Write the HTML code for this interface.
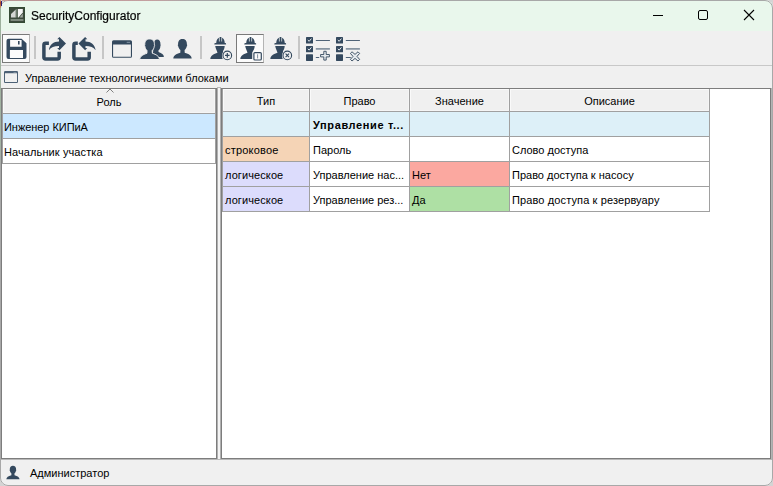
<!DOCTYPE html>
<html><head><meta charset="utf-8">
<style>
*{margin:0;padding:0;box-sizing:border-box}
html,body{width:773px;height:486px;overflow:hidden;background:#d4d4d4}
body{font-family:"Liberation Sans",sans-serif;font-size:11px;color:#000;position:relative}
.a{position:absolute}
#win{position:absolute;left:0;top:0;width:773px;height:486px;background:#f0f0f0;border-radius:8px;overflow:hidden}
#frame{position:absolute;left:0;top:0;width:773px;height:486px;border:1px solid #a8a8a8;border-radius:8px;pointer-events:none}
#title{position:absolute;left:0;top:0;width:773px;height:31px;background:#e9f7ec}
.t{position:absolute;white-space:nowrap;line-height:14px}
.sep{position:absolute;top:36px;width:2px;height:23px;background:#c6c6c6}
.btn{position:absolute;top:34px;width:28px;height:29px;border:1px solid #7a7a7a;border-right-color:#b4b4b4;background:#fbfbfb}
svg{position:absolute;overflow:visible}
.hl{position:absolute;height:1px;background:#a0a0a0}
.vl{position:absolute;width:1px;background:#a0a0a0}
.bg{position:absolute}
.hdr{position:absolute;text-align:center;white-space:nowrap;line-height:14px}
</style></head><body>
<div id="win">
  <div id="title">
    <svg style="left:9px;top:7px" width="16" height="16" viewBox="0 0 16 16">
      <rect width="16" height="16" fill="#344c34"/>
      <rect x="0.8" y="0.8" width="14.4" height="14.4" fill="#3c4a3c"/>
      <path d="M2,10.5 L2,7 L6.8,2.6 L6.8,10.5 Z" fill="#d4d6d4"/>
      <rect x="6.8" y="2" width="2" height="8.5" fill="#6a786a"/>
      <path d="M9,2 L13.8,2 L13.8,5.5 L9.5,10.5 L9,10.5 Z" fill="#f6f6f6"/>
      <path d="M10.6,10.5 L13.8,6.6 L13.8,10.5 Z" fill="#a4aca4"/>
      <rect x="1.6" y="12.2" width="12.8" height="1.6" fill="#8e9a8e"/>
    </svg>
    <div class="a" style="left:653px;top:15px;width:10px;height:1px;background:#000"></div>
    <div class="a" style="left:698px;top:10px;width:10px;height:10px;border:1px solid #000;border-radius:2px"></div>
    <svg style="left:743px;top:9px" width="12" height="12" viewBox="0 0 12 12">
      <path d="M1 1 L11 11 M11 1 L1 11" stroke="#000" stroke-width="1.1"/>
    </svg>
  </div>
  <!-- toolbar -->
  <div class="btn" style="left:2px"></div>
  <div class="sep" style="left:34px"></div>
  <div class="sep" style="left:102px"></div>
  <div class="sep" style="left:200px"></div>
  <div class="btn" style="left:236px"></div>
  <div class="sep" style="left:298px"></div>
  <div class="hl" style="left:0;top:65px;width:773px;background:#c8c8c8"></div>

  
  <svg style="left:0;top:0" width="773" height="486" viewBox="0 0 773 486">
    <g fill="#34495e">
      <!-- save -->
      <path fill-rule="evenodd" d="M6.5,40.7 Q6.5,38.7 8.5,38.7 L21.6,38.7 L26.5,43.3 L26.5,57 Q26.5,59 24.5,59 L8.5,59 Q6.5,59 6.5,57 Z M10.1,40 L10.1,46.7 L21.6,46.7 L21.6,40 Z M18,41.1 L18,44.6 L19.6,44.6 L19.6,41.1 Z M9.9,49.9 L9.9,57.9 L23,57.9 L23,49.9 Z"/>
      <!-- export -->
      <g transform="translate(40,35)">
        <path d="M8.9,8.3 L5.6,8.3 Q3.9,8.3 3.9,10 L3.9,22.2 Q3.9,23.9 5.6,23.9 L17.5,23.9 Q19.2,23.9 19.2,22.2 L19.2,16.7" fill="none" stroke="#34495e" stroke-width="3.5"/>
        <path d="M8.9,15.3 C9.6,10 13.5,6.6 19,6.6 L19,4.2 L17.2,4.2 L19.4,2 L26,8.6 L19.4,15.2 L17.2,13 L19,13 L19,11 C14,11 11,12.3 8.9,15.3 Z"/>
      </g>
      <!-- import -->
      <g transform="translate(70,35)">
        <path d="M7.8,8.3 L5.6,8.3 Q3.9,8.3 3.9,10 L3.9,22.2 Q3.9,23.9 5.6,23.9 L17.5,23.9 Q19.2,23.9 19.2,22.2 L19.2,16.7" fill="none" stroke="#34495e" stroke-width="3.5"/>
        <path d="M25.6,15.3 C24.9,10 21,6.6 15.5,6.6 L15.5,4.2 L17.3,4.2 L15.1,2 L8.5,8.6 L15.1,15.2 L17.3,13 L15.5,13 L15.5,11 C20.5,11 23.5,12.3 25.6,15.3 Z"/>
      </g>
      <!-- window -->
      <g transform="translate(108,35)">
        <path fill-rule="evenodd" d="M4,6.7 Q4,5.2 5.5,5.2 L22.5,5.2 Q24,5.2 24,6.7 L24,21.3 Q24,22.8 22.5,22.8 L5.5,22.8 Q4,22.8 4,21.3 Z M5.1,9.5 L5.1,21.7 L22.9,21.7 L22.9,9.5 Z"/>
        <rect x="18.7" y="6.8" width="3.3" height="1" fill="#8596a6"/>
      </g>
      <!-- users -->
      <g transform="translate(138,35)">
        <path d="M14.5,21.9 L25.9,21.9 C25.9,19.4 23.6,18.1 20.6,17 L20.4,15.6 C21.6,14.6 22.3,12.9 22.4,11 C22.8,10.6 22.8,9.9 22.5,9.6 C22.6,6.3 21.2,4.6 19.2,4.6 C17.2,4.6 15.8,6.3 15.9,9.6 Z"/>
        <path d="M1.8,24.5 C2,21.2 4.7,19.7 8.9,18.3 L9,15.6 C7.8,14.4 7.1,12.9 6.9,11.3 C6.5,10.9 6.5,10.1 6.8,9.8 C6.6,5.8 8.6,4 11.6,4 C14.6,4 16.6,5.8 16.4,9.8 C16.7,10.1 16.7,10.9 16.3,11.3 C16.1,12.9 15.4,14.4 14.2,15.6 L14.3,18.2 C18.5,19.7 21.2,21.2 21.4,24.5 Z" stroke="#f0f0f0" stroke-width="1"/>
      </g>
      <!-- user -->
      <g transform="translate(168,35)">
        <path d="M5.3,23.6 C5.5,20.5 8,19 12.3,17.7 L12.4,15.1 C11.2,14 10.5,12.7 10.2,11.2 C9.7,10.8 9.7,10 10.1,9.6 C9.9,5.6 11.8,3.9 14.5,3.9 C17.2,3.9 19.1,5.6 18.9,9.6 C19.3,10 19.3,10.8 18.8,11.2 C18.5,12.7 17.8,14 16.6,15.1 L16.7,17.7 C21,19 23.5,20.5 23.7,23.6 Z"/>
      </g>
      <!-- worker add -->
      <g transform="translate(206,35)" id="wk">
        <path d="M8.3,9.4 Q8,8 9.7,8 L10.2,8 C10.4,5 11.5,3.3 12.9,2.7 L12.9,6.6 L13.6,6.6 L13.6,2 L15.4,2 L15.4,6.6 L16.1,6.6 L16.1,2.7 C17.5,3.3 18.6,5 18.8,8 L19,8 Q20.5,8 20.1,9.4 Z"/>
        <path d="M9.2,11 L18.7,11 C18.6,13 18,14.6 17,16 L16.6,24 L4.3,24 C4.5,20.6 8,19 11.5,17.8 C11,15.8 9.5,13.5 9.2,11 Z"/>
      </g>
      <g transform="translate(236,35)">
        <path d="M8.3,9.4 Q8,8 9.7,8 L10.2,8 C10.4,5 11.5,3.3 12.9,2.7 L12.9,6.6 L13.6,6.6 L13.6,2 L15.4,2 L15.4,6.6 L16.1,6.6 L16.1,2.7 C17.5,3.3 18.6,5 18.8,8 L19,8 Q20.5,8 20.1,9.4 Z"/>
        <path d="M9.2,11 L18.7,11 C18.6,13 18,14.6 17,16 L16.6,24 L4.3,24 C4.5,20.6 8,19 11.5,17.8 C11,15.8 9.5,13.5 9.2,11 Z"/>
      </g>
      <g transform="translate(266,35)">
        <path d="M8.3,9.4 Q8,8 9.7,8 L10.2,8 C10.4,5 11.5,3.3 12.9,2.7 L12.9,6.6 L13.6,6.6 L13.6,2 L15.4,2 L15.4,6.6 L16.1,6.6 L16.1,2.7 C17.5,3.3 18.6,5 18.8,8 L19,8 Q20.5,8 20.1,9.4 Z"/>
        <path d="M9.2,11 L18.7,11 C18.6,13 18,14.6 17,16 L16.6,24 L4.3,24 C4.5,20.6 8,19 11.5,17.8 C11,15.8 9.5,13.5 9.2,11 Z"/>
      </g>
      <!-- badges -->
      <circle cx="227.3" cy="55.4" r="5.3" fill="#f0f0f0"/>
      <circle cx="227.3" cy="55.4" r="4.3" fill="none" stroke="#34495e" stroke-width="1.1"/>
      <path d="M225,55.4 L229.6,55.4 M227.3,53.1 L227.3,57.7" stroke="#34495e" stroke-width="1.2"/>
      <rect x="252.3" y="51" width="10.6" height="10.6" rx="1.5" fill="#fbfbfb"/>
      <rect x="253.9" y="52.6" width="7.4" height="7.4" rx="1" fill="none" stroke="#34495e" stroke-width="1.2"/>
      <path d="M257.6,54.3 L257.6,58.4" stroke="#7d8d9d" stroke-width="1"/>
      <circle cx="287.3" cy="55.4" r="5.3" fill="#f0f0f0"/>
      <circle cx="287.3" cy="55.4" r="4.3" fill="none" stroke="#34495e" stroke-width="1.1"/>
      <path d="M285.6,53.7 L289,57.1 M289,53.7 L285.6,57.1" stroke="#34495e" stroke-width="1.1"/>
      <!-- checklist add -->
      <g transform="translate(304,35)">
        <rect x="2" y="2" width="7" height="6.6" rx="0.6"/>
        <rect x="2" y="10.9" width="7" height="6.4" rx="0.6"/>
        <rect x="2" y="19.3" width="7" height="6.6" rx="0.6"/>
        <path d="M3.8,5 L5.2,6.3 L7.4,3.6 M3.8,13.8 L5.2,15.1 L7.4,12.4" fill="none" stroke="#e8ecf0" stroke-width="1"/>
        <rect x="11.8" y="5" width="14.1" height="1" fill="#4f6378"/>
        <rect x="11.8" y="13.2" width="14.1" height="1.4" fill="#6e7f90"/>
        <rect x="11.8" y="22" width="3.4" height="1" fill="#4f6378"/>
        <path d="M19.8,16.3 L22.2,16.3 L22.2,19.5 L25.4,19.5 L25.4,21.9 L22.2,21.9 L22.2,25.1 L19.8,25.1 L19.8,21.9 L16.6,21.9 L16.6,19.5 L19.8,19.5 Z" fill="#e6eaee" stroke="#34495e" stroke-width="0.9" stroke-linejoin="round"/>
      </g>
      <g transform="translate(334,35)">
        <rect x="2" y="2" width="7" height="6.6" rx="0.6"/>
        <rect x="2" y="10.9" width="7" height="6.4" rx="0.6"/>
        <rect x="2" y="19.3" width="7" height="6.6" rx="0.6"/>
        <path d="M3.8,5 L5.2,6.3 L7.4,3.6 M3.8,13.8 L5.2,15.1 L7.4,12.4" fill="none" stroke="#e8ecf0" stroke-width="1"/>
        <rect x="11.8" y="5" width="14.1" height="1" fill="#4f6378"/>
        <rect x="11.8" y="13.2" width="14.1" height="1.4" fill="#6e7f90"/>
        <rect x="11.8" y="22" width="5" height="1" fill="#4f6378"/>
        <path d="M18,16.8 L21,19.4 L24,16.8 L25.6,18.4 L23,21.4 L25.6,24.4 L24,26 L21,23.4 L18,26 L16.4,24.4 L19,21.4 L16.4,18.4 Z" fill="#e6eaee" stroke="#34495e" stroke-width="0.9" stroke-linejoin="round"/>
      </g>
      <!-- tab icon -->
      <path fill-rule="evenodd" fill="#4c6075" d="M4,72.2 Q4,71 5.2,71 L16.8,71 Q18,71 18,72.2 L18,81.8 Q18,83 16.8,83 L5.2,83 Q4,83 4,81.8 Z M5,73.3 L5,82 L17,82 L17,73.3 Z"/><rect x="13.5" y="72" width="3" height="0.8" fill="#8596a6"/>
      <!-- status user -->
      <g transform="translate(2.5,463.13) scale(0.72,0.685)">
        <path d="M5.3,23.6 C5.5,20.5 8,19 12.3,17.7 L12.4,15.1 C11.2,14 10.5,12.7 10.2,11.2 C9.7,10.8 9.7,10 10.1,9.6 C9.9,5.6 11.8,3.9 14.5,3.9 C17.2,3.9 19.1,5.6 18.9,9.6 C19.3,10 19.3,10.8 18.8,11.2 C18.5,12.7 17.8,14 16.6,15.1 L16.7,17.7 C21,19 23.5,20.5 23.7,23.6 Z"/>
      </g>
    </g>
  </svg>

  <!-- tab row -->
    <div class="t" style="left:25px;top:71px">Управление технологическими блоками</div>

  <!-- left panel -->
  <div class="bg" style="left:1px;top:88px;width:216px;height:371px;background:#fff;border:1px solid #7d7d7d"></div>
  <div class="vl" style="left:217px;top:88px;height:372px;background:#b0b0b0"></div>
  <div class="vl" style="left:218px;top:88px;height:371px;width:2px;background:#f4f4f4"></div>
  <div class="vl" style="left:220px;top:88px;height:372px;background:#b0b0b0"></div>
  <div class="hl" style="left:1px;top:459px;width:771px;background:#b8b8b8"></div>
  <div class="a" style="left:217px;top:87px;width:4px;height:1px;background:#b8b8b8"></div>
  <div class="bg" style="left:3px;top:89px;width:212px;height:24px;background:#f0f0f0;border:1px solid #fafafa;border-right-color:#f5f5f5;border-bottom-color:#f5f5f5"></div>
  <div class="vl" style="left:2px;top:89px;height:75px"></div>
  <div class="vl" style="left:215px;top:89px;height:75px"></div>
  <div class="hl" style="left:2px;top:113px;width:214px"></div>
  <svg style="left:106px;top:88px" width="8" height="5" viewBox="0 0 8 5"><path d="M0.5 4.5 L4 1 L7.5 4.5" fill="none" stroke="#808080" stroke-width="1"/></svg>
  <div class="hdr" style="left:3px;top:95px;width:212px">Роль</div>
  <div class="bg" style="left:3px;top:114px;width:212px;height:24px;background:#cce8ff"></div>
  <div class="hl" style="left:2px;top:138px;width:214px"></div>
  <div class="t" style="left:4px;top:120px;letter-spacing:-0.05px">Инженер КИПиА</div>
  <div class="hl" style="left:2px;top:163px;width:214px"></div>
  <div class="t" style="left:4px;top:145px;letter-spacing:0.1px">Начальник участка</div>

  <!-- right panel -->
  <div class="bg" style="left:221px;top:88px;width:550px;height:371px;background:#fff;border:1px solid #7d7d7d"></div>
  <div class="vl" style="left:222px;top:89px;height:123px"></div>
  <div class="bg" style="left:223px;top:89px;width:86px;height:22px;background:#f0f0f0;border:1px solid #fafafa;border-right-color:#f5f5f5;border-bottom-color:#f5f5f5"></div>
  <div class="bg" style="left:310px;top:89px;width:99px;height:22px;background:#f0f0f0;border:1px solid #fafafa;border-right-color:#f5f5f5;border-bottom-color:#f5f5f5"></div>
  <div class="bg" style="left:410px;top:89px;width:99px;height:22px;background:#f0f0f0;border:1px solid #fafafa;border-right-color:#f5f5f5;border-bottom-color:#f5f5f5"></div>
  <div class="bg" style="left:510px;top:89px;width:199px;height:22px;background:#f0f0f0;border:1px solid #fafafa;border-right-color:#f5f5f5;border-bottom-color:#f5f5f5"></div>
  <div class="hl" style="left:223px;top:111px;width:487px"></div>
  <div class="hdr" style="left:223px;top:94px;width:86px">Тип</div>
  <div class="hdr" style="left:310px;top:94px;width:99px">Право</div>
  <div class="hdr" style="left:410px;top:94px;width:99px">Значение</div>
  <div class="hdr" style="left:510px;top:94px;width:199px">Описание</div>
  <!-- group row -->
  <div class="bg" style="left:223px;top:112px;width:486px;height:24px;background:#ddf0f8"></div>
  <div class="t" style="left:313px;top:118px;font-weight:bold;letter-spacing:0.62px">Управление т...</div>
  <!-- row 1 -->
  <div class="bg" style="left:223px;top:137px;width:86px;height:24px;background:#f5d4b6"></div>
  <div class="t" style="left:225px;top:143px;letter-spacing:0.2px">строковое</div>
  <div class="t" style="left:313px;top:143px">Пароль</div>
  <div class="t" style="left:512px;top:143px">Слово доступа</div>
  <!-- row 2 -->
  <div class="bg" style="left:223px;top:162px;width:86px;height:24px;background:#dcdcfc"></div>
  <div class="bg" style="left:410px;top:162px;width:99px;height:24px;background:#fba8a0"></div>
  <div class="t" style="left:225px;top:168px;letter-spacing:0.1px">логическое</div>
  <div class="t" style="left:313px;top:168px">Управление нас...</div>
  <div class="t" style="left:412px;top:168px">Нет</div>
  <div class="t" style="left:512px;top:168px">Право доступа к насосу</div>
  <!-- row 3 -->
  <div class="bg" style="left:223px;top:187px;width:86px;height:24px;background:#dcdcfc"></div>
  <div class="bg" style="left:410px;top:187px;width:99px;height:24px;background:#aee0a4"></div>
  <div class="t" style="left:225px;top:193px;letter-spacing:0.1px">логическое</div>
  <div class="t" style="left:313px;top:193px">Управление рез...</div>
  <div class="t" style="left:412px;top:193px">Да</div>
  <div class="t" style="left:512px;top:193px;letter-spacing:0.12px">Право доступа к резервуару</div>
  <!-- grid lines -->
  <div class="hl" style="left:223px;top:136px;width:487px"></div>
  <div class="hl" style="left:223px;top:161px;width:487px"></div>
  <div class="hl" style="left:223px;top:186px;width:487px"></div>
  <div class="hl" style="left:223px;top:211px;width:487px"></div>
  <div class="vl" style="left:309px;top:89px;height:123px"></div>
  <div class="vl" style="left:409px;top:89px;height:123px"></div>
  <div class="vl" style="left:509px;top:89px;height:123px"></div>
  <div class="vl" style="left:709px;top:89px;height:123px"></div>

  <!-- status -->
  <div class="t" style="left:30px;top:466px">Администратор</div>
</div>
<div id="frame"></div>
<div class="a" style="left:0;top:0;width:1px;height:9px;background:linear-gradient(to bottom,#e0a080,#b04020 30%,#c08050 70%,#c0a090)"></div>
<div class="a" style="left:1px;top:1px;width:1px;height:5px;background:#302070"></div>
<div class="a" style="left:2px;top:0;width:6px;height:1px;background:#c8a098"></div>
<div class="a" style="left:8px;top:0;width:182px;height:1px;background:linear-gradient(to right,#b89494,#c4a0a0 80%,#a8a8a8)"></div>
<div class="a" style="left:0;top:8px;width:1px;height:160px;background:linear-gradient(to bottom,#9cb09c,#a4b4a4 85%,#a8a8a8)"></div>
<div class="a" style="left:771px;top:88px;width:1px;height:372px;background:#b4b4b4"></div>
<div class="t" style="left:31px;top:9px;font-size:12px;will-change:transform;-webkit-text-stroke:0.2px #000">SecurityConfigurator</div>
</body></html>
